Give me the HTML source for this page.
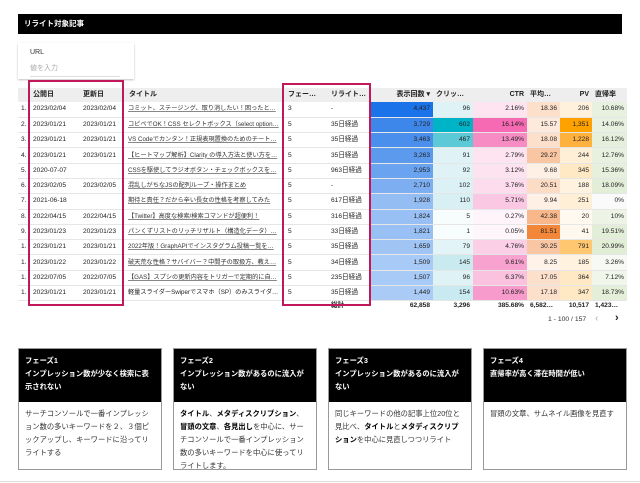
<!DOCTYPE html>
<html><head><meta charset="utf-8"><style>
*{margin:0;padding:0;box-sizing:border-box}
body{width:640px;height:483px;background:#fff;font-family:"Liberation Sans","Noto Sans CJK JP",sans-serif;color:#222;position:relative;overflow:hidden}
.bar{position:absolute;left:18px;top:14px;width:604px;height:20px;background:#000;color:#fff;font-size:7.5px;font-weight:bold;padding:6px 6px;line-height:8px}
.filter{position:absolute;left:18px;top:43px;width:116px;height:36px;box-shadow:0 1px 2px rgba(0,0,0,.25);font-size:7px}
.filter .l{position:absolute;left:12px;top:6px;color:#333}
.filter .p{position:absolute;left:12px;top:20px;color:#aaa;width:90px;border-bottom:1px solid #ddd;padding-bottom:3px}
table{position:absolute;left:18px;top:88px;border-collapse:collapse;table-layout:fixed;width:609px;font-size:6.6px}
td,th{height:15.3px;line-height:8px;vertical-align:middle;padding:0 3px;white-space:nowrap;overflow:hidden;border-bottom:1px solid #e6e6e6}
th{height:14px;background:#eee;font-weight:bold;text-align:left;font-size:7px;border:none}
td.r,th.r{text-align:right}
td.t{color:#333;text-decoration:underline;text-decoration-color:#888;font-size:6.2px;padding-left:2px}
td.t2{font-size:6.2px;padding-left:2px}
tr.tot td{border:none;font-weight:bold;height:9px}
.box{position:absolute;border:2px solid #c2185b}
.card{position:absolute;top:348px;width:144px;height:122px;border:1px solid #999;font-size:7.3px}
.card .h{background:#000;color:#fff;font-weight:bold;height:53px;padding:5px 6px;line-height:13px}
.card .b{padding:5px 6px;line-height:13px;color:#333}
.card .b b{color:#000}
</style></head><body>
<div class="bar">リライト対象記事</div>
<div class="filter"><div class="l">URL</div><div class="p">値を入力</div></div>
<table>
<colgroup><col style="width:12px"><col style="width:50px"><col style="width:46px"><col style="width:159px"><col style="width:43px"><col style="width:42px"><col style="width:63px"><col style="width:40px"><col style="width:54px"><col style="width:33px"><col style="width:32px"><col style="width:35px"></colgroup>
<tr><th></th><th>公開日</th><th>更新日</th><th>タイトル</th><th>フェー…</th><th>リライト…</th><th class="r">表示回数 ▾</th><th>クリッ…</th><th class="r">CTR</th><th>平均…</th><th class="r">PV</th><th>直帰率</th></tr>
<tr><td>1.</td><td>2023/02/04</td><td>2023/02/04</td><td class="t">コミット、ステージング、取り消したい！困ったと…</td><td>3</td><td>-</td><td class="r" style="background:#1a73e8">4,437</td><td class="r" style="background:#dff3f6">96</td><td class="r" style="background:#fde4f0">2.16%</td><td class="r" style="background:#fde0cc">18.36</td><td class="r" style="background:#fff1dc">206</td><td class="r" style="background:#e8f1df">10.68%</td></tr>
<tr><td>2.</td><td>2023/01/21</td><td>2023/01/21</td><td class="t">コピペでOK！CSS セレクトボックス（select option…</td><td>5</td><td>35日経過</td><td class="r" style="background:#3d86ea">3,729</td><td class="r" style="background:#00b4c8">602</td><td class="r" style="background:#f66ab4">16.14%</td><td class="r" style="background:#feeadc">15.57</td><td class="r" style="background:#ffa200">1,351</td><td class="r" style="background:#e8f1df">14.06%</td></tr>
<tr><td>3.</td><td>2023/01/21</td><td>2023/01/21</td><td class="t">VS Codeでカンタン！正規表現置換のためのチート…</td><td>5</td><td>35日経過</td><td class="r" style="background:#4a8fec">3,463</td><td class="r" style="background:#5cc9d6">467</td><td class="r" style="background:#f78cc5">13.49%</td><td class="r" style="background:#fde0cc">18.08</td><td class="r" style="background:#ffb13d">1,228</td><td class="r" style="background:#e5efdb">16.12%</td></tr>
<tr><td>4.</td><td>2023/01/21</td><td>2023/01/21</td><td class="t">【ヒートマップ解析】Clarity の導入方法と使い方を…</td><td>5</td><td>35日経過</td><td class="r" style="background:#5c9aee">3,263</td><td class="r" style="background:#dff3f6">91</td><td class="r" style="background:#fde4f0">2.79%</td><td class="r" style="background:#f9c6a3">29.27</td><td class="r" style="background:#ffefd6">244</td><td class="r" style="background:#e8f1df">12.76%</td></tr>
<tr><td>5.</td><td>2020-07-07</td><td></td><td class="t">CSSを駆使してラジオボタン・チェックボックスを…</td><td>5</td><td>963日経過</td><td class="r" style="background:#6aa3ef">2,953</td><td class="r" style="background:#dff3f6">92</td><td class="r" style="background:#fde2ef">3.12%</td><td class="r" style="background:#fff0e6">9.68</td><td class="r" style="background:#ffe8c4">345</td><td class="r" style="background:#e6f0dc">15.36%</td></tr>
<tr><td>6.</td><td>2023/02/05</td><td>2023/02/05</td><td class="t">混乱しがちなJSの配列ループ・操作まとめ</td><td>5</td><td>-</td><td class="r" style="background:#7caef1">2,710</td><td class="r" style="background:#dbf1f5">102</td><td class="r" style="background:#fddced">3.76%</td><td class="r" style="background:#fddcc6">20.51</td><td class="r" style="background:#fff2de">188</td><td class="r" style="background:#e3eed8">18.09%</td></tr>
<tr><td>7.</td><td>2021-06-18</td><td></td><td class="t">期待と責任？だから辛い長女の性格を考察してみた</td><td>5</td><td>617日経過</td><td class="r" style="background:#94bdf4">1,928</td><td class="r" style="background:#d8f0f4">110</td><td class="r" style="background:#fbc8e3">5.71%</td><td class="r" style="background:#fff0e6">9.94</td><td class="r" style="background:#ffefd6">251</td><td class="r" style="background:#fafafa">0%</td></tr>
<tr><td>8.</td><td>2022/04/15</td><td>2022/04/15</td><td class="t">【Twitter】高度な検索/検索コマンドが超便利！</td><td>5</td><td>316日経過</td><td class="r" style="background:#98c0f4">1,824</td><td class="r" style="background:#f7fcfd">5</td><td class="r" style="background:#fef4f9">0.27%</td><td class="r" style="background:#f8b88c">42.38</td><td class="r" style="background:#fff9f0">20</td><td class="r" style="background:#edf4e6">10%</td></tr>
<tr><td>9.</td><td>2023/01/23</td><td>2023/01/23</td><td class="t">パンくずリストのリッチリザルト（構造化データ）…</td><td>5</td><td>33日経過</td><td class="r" style="background:#98c0f4">1,821</td><td class="r" style="background:#f7fcfd">1</td><td class="r" style="background:#fef6fa">0.05%</td><td class="r" style="background:#f2873a">81.51</td><td class="r" style="background:#fff8ee">41</td><td class="r" style="background:#e3eed8">19.51%</td></tr>
<tr><td>1.</td><td>2023/01/21</td><td>2023/01/21</td><td class="t">2022年版！GraphAPIでインスタグラム投稿一覧を…</td><td>5</td><td>35日経過</td><td class="r" style="background:#a0c5f5">1,659</td><td class="r" style="background:#e2f4f7">79</td><td class="r" style="background:#fbd0e7">4.76%</td><td class="r" style="background:#f9c6a3">30.25</td><td class="r" style="background:#ffc870">791</td><td class="r" style="background:#e1edd5">20.99%</td></tr>
<tr><td>1.</td><td>2023/01/22</td><td>2023/01/22</td><td class="t">破天荒な性格？サバイバー？中間子の取扱方、教え…</td><td>5</td><td>34日経過</td><td class="r" style="background:#a8caf6">1,509</td><td class="r" style="background:#c9ebf0">145</td><td class="r" style="background:#f8a2cf">9.61%</td><td class="r" style="background:#fff2e9">8.25</td><td class="r" style="background:#fff2de">185</td><td class="r" style="background:#f7faf4">3.26%</td></tr>
<tr><td>1.</td><td>2022/07/05</td><td>2022/07/05</td><td class="t">【GAS】スプシの更新内容をトリガーで定期的に自…</td><td>5</td><td>235日経過</td><td class="r" style="background:#a8caf6">1,507</td><td class="r" style="background:#dff3f6">96</td><td class="r" style="background:#fbc2e0">6.37%</td><td class="r" style="background:#fde0cc">17.05</td><td class="r" style="background:#ffe8c4">364</td><td class="r" style="background:#f0f6ea">7.12%</td></tr>
<tr><td>1.</td><td>2023/01/21</td><td>2023/01/21</td><td class="t2">軽量スライダーSwiperでスマホ（SP）のみスライダ…</td><td>5</td><td>35日経過</td><td class="r" style="background:#aacbf6">1,449</td><td class="r" style="background:#c8eaf0">154</td><td class="r" style="background:#f79bcc">10.63%</td><td class="r" style="background:#fde0cc">17.18</td><td class="r" style="background:#ffe8c4">347</td><td class="r" style="background:#e4efd9">18.73%</td></tr>
<tr class="tot"><td></td><td></td><td></td><td></td><td></td><td>総計</td><td class="r">62,858</td><td class="r">3,296</td><td class="r">385.68%</td><td>6,582…</td><td class="r">10,517</td><td>1,423…</td></tr>
</table>
<div class="box" style="left:28px;top:80px;width:96px;height:226px"></div>
<div class="box" style="left:282px;top:83px;width:89px;height:223px"></div>
<div style="position:absolute;left:548px;top:316px;font-size:6.8px;color:#333">1 - 100 / 157</div>
<div style="position:absolute;left:595px;top:313px;font-size:10px;color:#aaa">‹</div>
<div style="position:absolute;left:615px;top:312px;font-size:11px;color:#222;font-weight:bold">›</div>
<div class="card" style="left:18px"><div class="h">フェーズ1<br>インプレッション数が少なく検索に表示されない</div><div class="b">サーチコンソールで一番インプレッション数の多いキーワードを２、３個ピックアップし、キーワードに沿ってリライトする</div></div>
<div class="card" style="left:173px"><div class="h">フェーズ2<br>インプレッション数があるのに流入がない</div><div class="b"><b>タイトル</b>、<b>メタディスクリプション</b>、<b>冒頭の文章</b>、<b>各見出し</b>を中心に、サーチコンソールで一番インプレッション数の多いキーワードを中心に使ってリライトします。</div></div>
<div class="card" style="left:328px"><div class="h">フェーズ3<br>インプレッション数があるのに流入がない</div><div class="b">同じキーワードの他の記事上位20位と見比べ、<b>タイトル</b>と<b>メタディスクリプション</b>を中心に見直しつつリライト</div></div>
<div class="card" style="left:483px"><div class="h">フェーズ4<br>直帰率が高く滞在時間が低い</div><div class="b">冒頭の文章、サムネイル画像を見直す</div></div>
<div style="position:absolute;left:0;top:481px;width:640px;height:1px;background:#ddd"></div>
</body></html>
